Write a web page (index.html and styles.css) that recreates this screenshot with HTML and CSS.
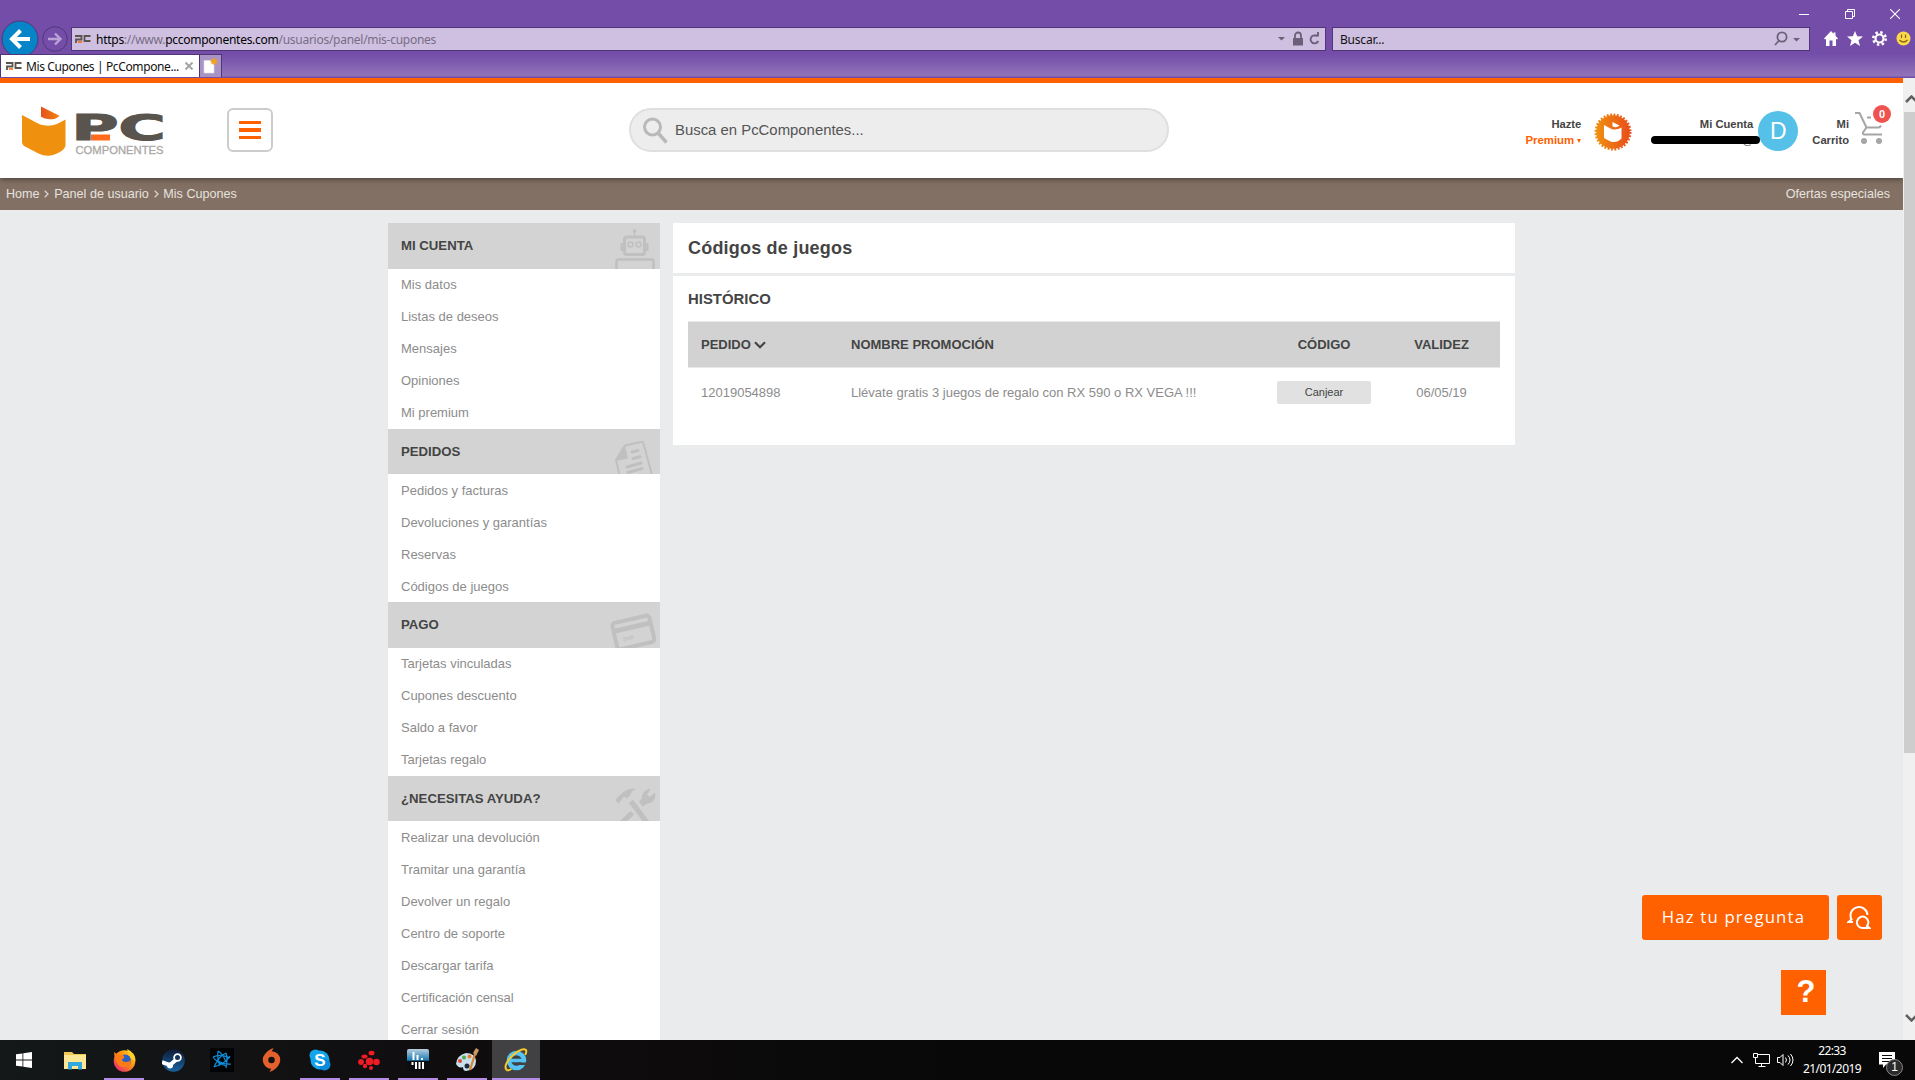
FILE: index.html
```html
<!DOCTYPE html>
<html lang="es">
<head>
    <meta charset="UTF-8">
    <meta name="viewport" content="width=device-width, initial-scale=1.0">
    <title>Mis Cupones | PcComponentes</title>
    <link rel="stylesheet" href="styles.css">
</head>
<body>
    <!-- Navegador -->
    <div class="browser">
        <div class="window-buttons">
            <svg width="10" height="10" viewBox="0 0 10 10"><path d="M0 5.5h10" stroke="#fff"/></svg>
            <svg width="10" height="10" viewBox="0 0 10 10" fill="none" stroke="#fff"><path d="M.5 2.5h7v7h-7zM2.5 2.500v-2h7v7h-2"/></svg>
            <svg width="10" height="10" viewBox="0 0 10 10"><path d="M0 0l10 10M10 0L0 10" stroke="#fff" stroke-width="1.1"/></svg>
        </div>
        <div class="nav-row">
            <svg class="nav-back" width="38" height="34" viewBox="0 0 38 34">
                <circle cx="19" cy="19" r="18" fill="#0584c7" stroke="#523577"/>
                <path d="M29 19H12M19.500 10.500L11 19l8.500 8.500" fill="none" stroke="#fff" stroke-width="4"/>
            </svg>
            <svg class="nav-next" width="26" height="26" viewBox="0 0 26 26">
                <circle cx="13" cy="13" r="12.300" fill="none" stroke="#523577"/>
                <path d="M6 13h12M13 7.500l5.500 5.500-5.500 5.500" fill="none" stroke="#b8a3d4" stroke-width="2.400"/>
            </svg>
            <div class="url-bar">
                <svg class="favicon" width="16" height="8" viewBox="0 0 16 8">
                    <path d="M1 8V4.500h5.500V1H0M15.500 1H9.500v5h6" fill="none" stroke="#59544d" stroke-width="1.800"/>
                    <path d="M3 7h4" stroke="#ff6000" stroke-width="1.500"/>
                </svg>
                <span class="url"><b>https</b>://www.<b>pccomponentes.com</b>/usuarios/panel/mis-cupones</span>
                <svg width="46" height="16" viewBox="0 0 46 16" fill="none" stroke="#6c6079">
                    <path d="M0 6h7L3.500 9.500z" fill="#6c6079" stroke="none"/>
                    <path d="M15 7h10v7.500H15z" fill="#6c6079" stroke="none"/>
                    <path d="M17 7V4.500a3 3 0 0 1 6 0V7" stroke-width="1.800"/>
                    <path d="M39 5.200A4 4 0 1 0 40.200 10M36 4.500h4V1" stroke-width="1.900"/>
                </svg>
            </div>
            <div class="search-bar">
                <span>Buscar...</span>
                <svg width="29" height="16" viewBox="0 0 29 16" fill="none" stroke="#6c6079" stroke-width="1.800">
                    <circle cx="8" cy="6" r="4.600"/><path d="M5 9.500L1 14"/>
                    <path d="M19 7h7l-3.500 3.500z" fill="#6c6079" stroke="none"/>
                </svg>
            </div>
            <div class="browser-tools">
                <svg width="14" height="15" viewBox="0 0 14 15" fill="#fff"><path d="M7 0L0 7.500l1 1 1-.8V15h3.500V9.500h3V15H12V7.700l1 .8 1-1-2.500-2.700V1.500h-2v1.200z"/></svg>
                <svg width="16" height="15" viewBox="0 0 16 15" fill="#fff"><path d="M8 0l2.200 5.200 5.800.3-4.500 3.700L13 15l-5-3.200L3 15l1.500-5.800L0 5.500l5.800-.3z"/></svg>
                <svg width="15" height="15" viewBox="0 0 15 15" fill="none" stroke="#fff"><circle cx="7.500" cy="7.500" r="4" stroke-width="2.200"/><circle cx="7.500" cy="7.500" r="6.200" stroke-width="2.500" stroke-dasharray="2.400 2.470"/></svg>
                <svg width="15" height="15" viewBox="0 0 15 15"><circle cx="7.500" cy="7.500" r="7" fill="#fcd94b"/><path d="M5.500 3.500v3.500M9.500 3.500v3.500M3.500 9q4 4 8 0" fill="none" stroke="#8a6414" stroke-width="1.200"/></svg>
            </div>
        </div>
        <div class="tabs">
            <div class="tab">
                <svg class="favicon" width="16" height="8" viewBox="0 0 16 8">
                    <path d="M1 8V4.500h5.500V1H0M15.500 1H9.500v5h6" fill="none" stroke="#59544d" stroke-width="1.800"/>
                    <path d="M3 7h4" stroke="#ff6000" stroke-width="1.500"/>
                </svg>
                <span class="tab-title">Mis Cupones | PcCompone...</span>
                <svg width="8" height="8" viewBox="0 0 8 8"><path d="M.5.5l7 7M7.500.5l-7 7" stroke="#a5a5a5" stroke-width="2"/></svg>
            </div>
            <div class="new-tab">
                <svg width="15" height="16" viewBox="0 0 15 16"><path d="M1 2.500h7l3 3V15H1z" fill="#fff" stroke="#ddd" stroke-width=".6"/><path d="M11 0v7M7.500 3.500h7M8.500 1l5 5M13.500 1l-5 5" stroke="#f5a21d" stroke-width="1.300"/></svg>
            </div>
        </div>
    </div>

    <!-- Página -->
    <div class="viewport">
        <div class="page">
            <header class="header">
                <svg class="logo" width="150" height="52" viewBox="0 0 150 52">
                    <defs>
                        <linearGradient id="flap"><stop offset="0" stop-color="#e6501e"/><stop offset="1" stop-color="#f0850f"/></linearGradient>
                    </defs>
                    <path d="M20 .5l18.500 9.200q-3 3.800-10 3.600-5-.2-8.500-2.500z" fill="url(#flap)"/>
                    <path d="M1 9l18 9.500q9 2.500 17-.5l8.500-4.500V39q0 3-4 6-12 8-23 2.500L3 40q-2-1.500-2-4z" fill="#f0900f"/>
                    <text class="logo-pc" x="50.500" y="34" textLength="94" lengthAdjust="spacingAndGlyphs">PC</text>
                    <path d="M70 28.500h19v6H70z" fill="#ff6a1c"/>
                    <text class="logo-sub" x="54.500" y="48" textLength="88" lengthAdjust="spacingAndGlyphs">COMPONENTES</text>
                </svg>
                <button class="menu-btn"><span></span><span></span><span></span></button>
                <div class="search">
                    <svg width="25" height="28" viewBox="0 0 25 28" fill="none" stroke="#b9b9b9"><circle cx="9.500" cy="11" r="8" stroke-width="3"/><path d="M15.500 17.500l8 9" stroke-width="3.500"/></svg>
                    <span>Busca en PcComponentes...</span>
                </div>
                <div class="user-nav">
                    <div class="nav-text premium">Hazte<br><span>Premium <i></i></span></div>
                    <svg class="seal" width="38" height="38" viewBox="0 0 38 38">
                        <defs>
                            <linearGradient id="seal"><stop offset="0" stop-color="#f0900f"/><stop offset="1" stop-color="#e84e1b"/></linearGradient>
                        </defs>
                        <circle cx="19" cy="19" r="16.800" fill="url(#seal)"/>
                        <circle cx="19" cy="19" r="17" fill="none" stroke="url(#seal)" stroke-width="3" stroke-dasharray="1.800 1.538"/>
                        <path d="M18.500 9l7 3.500q-3 3-7 1z" fill="#fff"/>
                        <path d="M10 12l7.500 4q5 1.500 10-1.500v11q-5 5-11 3L10 25z" fill="#fff"/>
                    </svg>
                    <div class="nav-text account">Mi Cuenta<br><span class="mail">@</span></div>
                    <div class="avatar">D</div>
                    <div class="nav-text cart-text">Mi<br>Carrito</div>
                    <div class="cart">
                        <svg width="30" height="34" viewBox="0 0 30 34" fill="none" stroke="#a5a5a5" stroke-width="2"><path d="M1 2h4.500l7 14.500h12q1.500 0 2.500-2M12.500 16.500L9 21.500q-.5 2 1.500 2H28M13 6.500h4"/><circle cx="10" cy="30" r="3" fill="#a5a5a5" stroke="none"/><circle cx="25" cy="30" r="3" fill="#a5a5a5" stroke="none"/></svg>
                        <span class="cart-badge">0</span>
                    </div>
                </div>
            </header>

            <nav class="breadcrumb">
                <div class="crumbs">
                    <a>Home</a>
                    <svg width="5" height="8" viewBox="0 0 5 8"><path d="M.7.7L4 4 .7 7.300" fill="none" stroke="#d8d2ce" stroke-width="1.300"/></svg>
                    <a>Panel de usuario</a>
                    <svg width="5" height="8" viewBox="0 0 5 8"><path d="M.7.7L4 4 .7 7.300" fill="none" stroke="#d8d2ce" stroke-width="1.300"/></svg>
                    <a>Mis Cupones</a>
                </div>
                <a class="offers">Ofertas especiales</a>
            </nav>

            <main class="content">
                <aside class="sidebar">
                    <h3>MI CUENTA
                        <svg width="42" height="41" viewBox="0 0 42 41" fill="none" stroke="#c0c0c0"><path d="M20.500 3v5" stroke-width="1.500"/><circle cx="20.500" cy="3" r="1.800" fill="#c0c0c0" stroke="none"/><rect x="10.500" y="9" width="20" height="17.500" rx="2" stroke-width="3"/><path d="M8 15v8M33 15v8" stroke-width="3"/><circle cx="16.500" cy="16.500" r="2.500" stroke-width="1.500"/><circle cx="24.500" cy="16.500" r="2.500" stroke-width="1.500"/><path d="M2.500 42V33q0-1.500 1.500-1.500h34q1.500 0 1.500 1.500v9" stroke-width="2.500"/></svg>
                    </h3>
                    <ul>
                        <li>Mis datos</li>
                        <li>Listas de deseos</li>
                        <li>Mensajes</li>
                        <li>Opiniones</li>
                        <li>Mi premium</li>
                    </ul>
                    <h3>PEDIDOS
                        <svg width="42" height="34" viewBox="0 0 42 34" fill="none" stroke="#c0c0c0"><path d="M5.500 35L2 20l9-14.500L27 2q2-.5 2.500 1.500L38 35" stroke-width="2"/><path d="M2 21l9-15.500 3 13z" fill="#c0c0c0" stroke="none"/><path d="M18 12l6-1.500M19 18.500l7-1.700M13 27l14-4M14 32.500l14-4" stroke-width="3" stroke-linecap="round"/></svg>
                    </h3>
                    <ul>
                        <li>Pedidos y facturas</li>
                        <li>Devoluciones y garantías</li>
                        <li>Reservas</li>
                        <li>Códigos de juegos</li>
                    </ul>
                    <h3>PAGO
                        <svg width="46" height="35" viewBox="0 0 46 35"><g transform="rotate(-13 23 18)" fill="none" stroke="#c0c0c0"><rect x="4" y="6" width="38" height="27" rx="3" stroke-width="4"/><path d="M4 14h38" stroke-width="5"/></g><text class="card-number" x="13" y="27" transform="rotate(-13 18 26)">2020</text></svg>
                    </h3>
                    <ul>
                        <li>Tarjetas vinculadas</li>
                        <li>Cupones descuento</li>
                        <li>Saldo a favor</li>
                        <li>Tarjetas regalo</li>
                    </ul>
                    <h3>¿NECESITAS AYUDA?
                        <svg width="42" height="34" viewBox="0 0 42 34" fill="#c0c0c0"><path d="M1 13l6-6q6-6 15-5-5 2-5.500 6l-3.500 3.500-3-2-5.500 7z"/><path d="M15 16l4-3.500L35 34h-6.500z"/><path d="M6 34l10.500-10 3.500 3.500L13.500 34zM25 14.500l3-3q-1-6 7-10l1 1.500-3 4.500 2.500 2.500 5-4 1 .5q0 9-8 10l-5 3z"/></svg>
                    </h3>
                    <ul>
                        <li>Realizar una devolución</li>
                        <li>Tramitar una garantía</li>
                        <li>Devolver un regalo</li>
                        <li>Centro de soporte</li>
                        <li>Descargar tarifa</li>
                        <li>Certificación censal</li>
                        <li>Cerrar sesión</li>
                    </ul>
                </aside>

                <section class="panel">
                    <h1>Códigos de juegos</h1>
                    <div class="history">
                        <h2>HISTÓRICO</h2>
                        <table>
                            <thead>
                                <tr>
                                    <th class="col-order">PEDIDO<svg width="12" height="8" viewBox="0 0 12 8"><path d="M1 1.300l5 5 5-5" fill="none" stroke="#444" stroke-width="2.200"/></svg></th>
                                    <th class="col-name">NOMBRE PROMOCIÓN</th>
                                    <th class="col-code">CÓDIGO</th>
                                    <th class="col-date">VALIDEZ</th>
                                </tr>
                            </thead>
                            <tbody>
                                <tr>
                                    <td>12019054898</td>
                                    <td>Llévate gratis 3 juegos de regalo con RX 590 o RX VEGA !!!</td>
                                    <td class="col-code"><button class="redeem">Canjear</button></td>
                                    <td class="col-date">06/05/19</td>
                                </tr>
                            </tbody>
                        </table>
                    </div>
                </section>
            </main>

            <div class="chat">
                <button class="ask">Haz tu pregunta</button>
                <button class="chat-icon">
                    <svg width="24" height="24" viewBox="0 0 24 24" fill="none" stroke="#fff" stroke-width="2"><path d="M20.500 9A8.500 8.500 0 1 0 4.500 13.500L1.500 16H6"/><path d="M20 20a5.700 5.700 0 1 0-5 2h7.500z"/></svg>
                </button>
            </div>
            <div class="help">?</div>
        </div>
        <div class="scrollbar">
            <svg width="10" height="8" viewBox="0 0 10 8"><path d="M1 7l5.500-5.500L12 7" fill="none" stroke="#606060" stroke-width="2.500"/></svg>
            <div class="thumb"></div>
            <svg class="down" width="10" height="8" viewBox="0 0 10 8"><path d="M1 1l5.500 5.500L12 1" fill="none" stroke="#606060" stroke-width="2.500"/></svg>
        </div>
    </div>

    <!-- Barra de tareas -->
    <div class="taskbar">
        <div class="task start"><svg width="16" height="16" viewBox="0 0 16 16" fill="#fff"><path d="M0 2.300L6.500 1.400v6.200H0zM7.300 1.300L16 0v7.600H7.300zM0 8.400h6.500v6.200L0 13.700zM7.300 8.400H16V16l-8.700-1.300z"/></svg></div>
        <div class="task"><svg width="22" height="19" viewBox="0 0 22 19"><path d="M0 1h8l2 2h12v15H0z" fill="#f3c856"/><path d="M0 4h22v14H0z" fill="#ffe694"/><path d="M4 11h14v7.500h-4V15H8v3.500H4z" fill="#31a8e0"/></svg></div>
        <div class="task open"><svg width="23" height="23" viewBox="0 0 23 23"><defs><linearGradient id="fox" x1="1" y1="0" x2="0" y2="1"><stop offset="0" stop-color="#ffe226"/><stop offset=".45" stop-color="#ff8b16"/><stop offset="1" stop-color="#e31587"/></linearGradient></defs><circle cx="11.500" cy="12" r="10.800" fill="url(#fox)"/><path d="M14 0q9 4 8.500 12L17 9z" fill="#ffcf24"/><circle cx="12" cy="11.500" r="6" fill="#2861c4"/><path d="M1 3l4 3 5 0q3 3-1 4 0 3 4 3 3 0 5-2-1 8-8 7Q2 17 1 3z" fill="#ff7b16"/></svg></div>
        <div class="task"><svg width="23" height="23" viewBox="0 0 23 23"><defs><linearGradient id="steam" x2="0" y2="1"><stop offset="0" stop-color="#101b38"/><stop offset="1" stop-color="#1763a0"/></linearGradient></defs><circle cx="11.500" cy="11.500" r="11.300" fill="url(#steam)"/><path d="M0 13l8 3 7-6" fill="none" stroke="#fff" stroke-width="4"/><circle cx="15.500" cy="8.500" r="3.400" fill="#14305c" stroke="#fff" stroke-width="1.800"/><circle cx="8" cy="16.500" r="3" fill="#fff"/></svg></div>
        <div class="task"><svg width="24" height="24" viewBox="0 0 24 24"><rect width="24" height="24" rx="1" fill="#020305"/><g fill="none" stroke="#0d8fdd" stroke-width="1.200"><path d="M8 3q5 3 8 11M8 3q-1 8 2 15M3 9q8-3 17 1M3 9q4 6 13 9M20 8q-4 7-16 11M16 5q2 6 0 15M16 5q-7 3-12 14M21 16q-8 1-14-4"/></g></svg></div>
        <div class="task"><svg width="19" height="24" viewBox="0 0 19 24"><circle cx="9.500" cy="12" r="6" fill="none" stroke="#e4602c" stroke-width="5.500"/><path d="M2 8Q5 2 11.500 0L9 5zM17 16q-3 6-9.500 8l2.500-5z" fill="#e4602c"/></svg></div>
        <div class="task open"><svg width="22" height="22" viewBox="0 0 22 22"><circle cx="11" cy="11" r="9.500" fill="#12a5eb"/><circle cx="6.500" cy="6.500" r="6" fill="#12a5eb"/><circle cx="15.500" cy="15.500" r="6" fill="#0b8bdc"/><text class="skype-s" x="11" y="17" text-anchor="middle">S</text></svg></div>
        <div class="task open"><svg width="22" height="20" viewBox="0 0 22 20" fill="#ee1c25"><circle cx="11.500" cy="11.500" r="3.800"/><circle cx="3" cy="12" r="2.900"/><circle cx="7" cy="16" r="2.200"/><circle cx="18.500" cy="12" r="3.300"/><circle cx="13" cy="18" r="2"/><ellipse cx="13.500" cy="3" rx="3" ry="2.300"/><ellipse cx="6.500" cy="6.500" rx="3" ry="2"/></svg></div>
        <div class="task open"><svg width="22" height="22" viewBox="0 0 22 22"><defs><linearGradient id="mon" x2="0" y2="1"><stop offset="0" stop-color="#b9cfdf"/><stop offset=".52" stop-color="#1879b5"/><stop offset=".53" stop-color="#0b0d10"/></linearGradient></defs><rect width="22" height="22" rx="2" fill="url(#mon)"/><path d="M6.500 3v8M10.500 6v5M15 9v2M5.500 13v3M9 13v7M12.500 13v7M16 13v7" stroke="#fff" stroke-width="2"/></svg></div>
        <div class="task open"><svg width="24" height="24" viewBox="0 0 24 24"><path d="M1 16Q2 7 11 5q9 0 10 8 0 9-10 10-3 0-3-4-4 2-7-3z" fill="#c8dfee"/><circle cx="9" cy="9.500" r="2" fill="#52a94b"/><circle cx="14.500" cy="8.500" r="2" fill="#eb7e2d"/><circle cx="5" cy="13" r="2" fill="#db4935"/><circle cx="12" cy="18" r="2.500" fill="#202b35"/><path d="M15 22l5-16" stroke="#d78631" stroke-width="2.200"/><path d="M18 5l3-5 3 2-3 6z" fill="#c89768"/></svg></div>
        <div class="task open active"><svg width="24" height="24" viewBox="0 0 24 24"><circle cx="12.500" cy="12.500" r="7.500" fill="none" stroke="#55c3f2" stroke-width="4.500"/><path d="M7 12.500h14" stroke="#55c3f2" stroke-width="3.500"/><path d="M15 14.500h9v2.500h-9z" fill="#414043"/><path d="M2.500 22Q-1 17 8 8 18-1 22 2q1 2-1 5M2.500 22q2 1 5-1" fill="none" stroke="#f7c82b" stroke-width="2"/></svg></div>
        <div class="tray">
            <svg width="12" height="8" viewBox="0 0 12 8"><path d="M.5 7L6 1.500 11.500 7" fill="none" stroke="#fff" stroke-width="1.300"/></svg>
            <svg class="network" width="17" height="14" viewBox="0 0 17 14" fill="none" stroke="#fff"><path d="M5 1.500h11.500v9H5M8.500 10.500v3M5.500 13.500h7M.5.5h4v4h-4zM2.500 4.500v6H5"/></svg>
            <svg class="volume" width="17" height="14" viewBox="0 0 17 14" fill="none" stroke="#fff"><path d="M.5 4.500h2.500l3-3v11l-3-3H.5zM8.500 4.500q2 2.500 0 5M11 2.500q4 4.500 0 9M13.500 1q5 6 0 12"/></svg>
            <div class="clock">22:33<br>21/01/2019</div>
            <div class="notify">
                <svg width="16" height="16" viewBox="0 0 16 16"><path d="M0 0h16v12.500H7L4 16v-3.500H0z" fill="#fff"/><path d="M3 3.500h10M3 6.500h10M3 9.500h10" stroke="#0a0a0a"/></svg>
                <span>1</span>
            </div>
        </div>
    </div>
</body>
</html>
```
FILE: styles.css
```css
* {
    box-sizing: border-box;
}

body {
    margin: 0;
    width: 1915px;
    height: 1080px;
    overflow: hidden;
    display: flex;
    flex-direction: column;
    font-family: "Liberation Sans", Arial, sans-serif;
    font-size: 13px;
    color: #444;
}

svg {
    display: block;
    flex-shrink: 0;
}

button {
    border: none;
    padding: 0;
    font-family: inherit;
}

/* Navegador */
.browser {
    height: 78px;
    background: linear-gradient(#744da9 0, #744da9 54px, #9174b8 76px, #744da9 77px);
    font-family: "Noto Sans", sans-serif;
    font-size: 12px;
    color: #111;
    flex-shrink: 0;
}

.window-buttons {
    height: 20px;
    padding: 9px 15px 0 0;
    display: flex;
    justify-content: flex-end;
    gap: 35.5px;
}

.nav-row {
    height: 34px;
    display: flex;
    padding-left: 1px;
}

.nav-next {
    margin: 6px 3px 0 3px;
}

.url-bar,
.search-bar {
    height: 24px;
    margin-top: 7px;
    background: #cfc0e2;
    border: 1px solid #523577;
    display: flex;
    align-items: center;
}

.url-bar {
    width: 1255px;
    padding: 0 1px 0 3px;
}

.url {
    flex: 1;
    margin-left: 5px;
    color: #776d83;
    letter-spacing: -0.27px;
}

.url b {
    font-weight: 400;
    color: #000;
}

.search-bar {
    width: 478px;
    margin-left: 6px;
    padding: 0 6px 0 7px;
    justify-content: space-between;
    letter-spacing: -0.2px;
}

.browser-tools {
    display: flex;
    gap: 9px;
    padding: 11px 0 0 14px;
}

.tabs {
    display: flex;
    height: 24px;
}

.tab {
    width: 200px;
    height: 23px;
    background: #fff;
    border: 1px solid #523577;
    border-bottom: none;
    display: flex;
    align-items: center;
    padding: 0 6px 0 5px;
}

.tab-title {
    flex: 1;
    margin-left: 4px;
    letter-spacing: -0.38px;
    white-space: nowrap;
}

.new-tab {
    width: 22px;
    height: 23px;
    background: #a794c4;
    border: 1px solid #523577;
    border-left: none;
    border-bottom: none;
    padding: 3px 0 0 3px;
}

/* Página */
.viewport {
    height: 962px;
    display: flex;
    flex-shrink: 0;
}

.page {
    position: relative;
    width: 1903px;
    overflow: hidden;
    background: #eaebed;
    border-top: 5px solid #ff6000;
}

.header {
    position: relative;
    z-index: 1;
    height: 95px;
    background: #fff;
    box-shadow: 0 1px 6px rgba(0, 0, 0, 0.5);
    display: flex;
    align-items: flex-start;
    padding-left: 21px;
}

.logo {
    margin-top: 23px;
}

.logo-pc {
    font-family: "DejaVu Sans", sans-serif;
    font-weight: 700;
    font-size: 35px;
    fill: #59544d;
    stroke: #59544d;
    stroke-width: 1.2px;
}

.logo-sub {
    font-size: 11.5px;
    fill: #aaa8a4;
    stroke: #aaa8a4;
    stroke-width: 0.3px;
}

.menu-btn {
    width: 46px;
    height: 44px;
    margin: 25px 0 0 56px;
    background: #fff;
    border: 2px solid #ccc;
    border-radius: 6px;
    display: flex;
    flex-direction: column;
    align-items: center;
    justify-content: center;
    gap: 4px;
}

.menu-btn span {
    width: 22px;
    height: 3.4px;
    background: #ff6000;
}

.search {
    width: 540px;
    height: 44px;
    margin: 25px 0 0 356px;
    background: #ededed;
    border: 2px solid #dfdfdf;
    border-radius: 22px;
    display: flex;
    align-items: center;
    padding-left: 12px;
    font-size: 14.9px;
    color: #555;
}

.search span {
    margin: -1px 0 0 7px;
}

.user-nav {
    display: flex;
    margin-left: auto;
    padding-right: 19px;
}

.nav-text {
    font-size: 11.2px;
    font-weight: 700;
    line-height: 16px;
    text-align: right;
    padding-top: 33px;
}

.premium span {
    color: #ff6000;
    font-size: 11.4px;
}

.premium i {
    display: inline-block;
    vertical-align: middle;
    border: 2.5px solid transparent;
    border-top: 4px solid #ff6000;
    border-bottom: none;
}

.seal {
    margin: 30px 0 0 13px;
}

.account {
    position: relative;
    width: 108px;
    margin-left: 13px;
}

/* correo oculto */
.account::after {
    content: "";
    position: absolute;
    left: 6px;
    top: 53px;
    width: 109px;
    height: 8px;
    border-radius: 4px;
    background: #000;
    z-index: 1;
}

.mail {
    font-weight: 400;
}

.avatar {
    width: 40px;
    height: 40px;
    margin: 28px 0 0 5px;
    border-radius: 50%;
    background: #56c1e8;
    color: #fff;
    font-size: 23px;
    line-height: 40px;
    text-align: center;
}

.cart-text {
    margin-left: 14px;
}

.cart {
    position: relative;
    margin: 28px 0 0 5px;
}

.cart-badge {
    position: absolute;
    left: 19px;
    top: -6px;
    width: 18px;
    height: 18px;
    border-radius: 50%;
    background: #ef5350;
    color: #fff;
    font-size: 11px;
    font-weight: 700;
    line-height: 18px;
    text-align: center;
}

.breadcrumb {
    height: 32px;
    background: #837064;
    color: #e6e2df;
    display: flex;
    justify-content: space-between;
    align-items: center;
    padding: 0 13px 0 6px;
    font-size: 12.6px;
}

.crumbs {
    display: flex;
    align-items: center;
    gap: 4.8px;
}

.content {
    display: flex;
    justify-content: center;
    align-items: flex-start;
    gap: 13px;
    padding-top: 13px;
}

.sidebar {
    width: 272px;
    background: #fff;
}

.sidebar h3 {
    position: relative;
    overflow: hidden;
    height: 45.6px;
    line-height: 45px;
    margin: 0;
    padding-left: 13px;
    background: #d3d3d3;
    font-size: 13.2px;
}

/* icono de la sección, recortado por abajo */
.sidebar h3 svg {
    position: absolute;
    right: 4px;
    bottom: 0;
}

.card-number {
    font-size: 5px;
    fill: #c0c0c0;
}

.sidebar ul {
    list-style: none;
    margin: 0;
    padding: 0;
}

.sidebar li {
    height: 32px;
    line-height: 31px;
    padding: 0.35px 0 0 13px;
    color: #8c8c8c;
    font-size: 13px;
}

.panel {
    width: 842px;
}

.panel h1 {
    margin: 0 0 3px;
    height: 50px;
    line-height: 50px;
    padding-left: 15px;
    background: #fff;
    font-size: 18px;
    letter-spacing: 0.2px;
}

.history {
    height: 169px;
    background: #fff;
    padding: 0 15px;
}

.history h2 {
    margin: 0;
    height: 45px;
    line-height: 46px;
    font-size: 14.9px;
}

.history table {
    width: 100%;
    table-layout: fixed;
    border-collapse: collapse;
}

.history th {
    height: 46px;
    padding: 0 0 1px 13px;
    background: #d2d2d2;
    border-top: 1px solid #e8e8e8;
    border-bottom: 1px solid #e8e8e8;
    font-size: 13px;
    text-align: left;
}

.history th svg {
    display: inline-block;
    margin-left: 3px;
}

.history td {
    height: 49px;
    padding: 0 0 0 13px;
    color: #8c8c8c;
    font-size: 13px;
    white-space: nowrap;
}

.col-order {
    width: 150px;
}

.col-name {
    width: 427px;
}

.history .col-code,
.history .col-date {
    padding-left: 0;
    text-align: center;
}

.col-code {
    width: 118px;
}

.redeem {
    width: 94px;
    height: 23px;
    background: #e1e1e1;
    border-radius: 2px;
    color: #444;
    font-size: 11px;
}

.chat {
    position: absolute;
    right: 21px;
    top: 812px;
    display: flex;
    gap: 8px;
}

.ask,
.chat-icon {
    height: 45px;
    background: #ff6000;
    border-radius: 3px;
}

.ask {
    width: 187px;
    padding: 0 4px 2px 0;
    color: #fff;
    font-family: "Open Sans", sans-serif;
    font-size: 16.8px;
    letter-spacing: 1.15px;
}

.chat-icon {
    width: 45px;
    padding-left: 10px;
}

.help {
    position: absolute;
    left: 1781px;
    top: 887px;
    width: 45px;
    height: 45px;
    padding-left: 5px;
    background: #ff6000;
    color: #fff;
    font-size: 31px;
    font-weight: 700;
    line-height: 43px;
    text-align: center;
}

.scrollbar {
    width: 12px;
    background: #f0f0f0;
    padding: 17px 0 0 1px;
    overflow: hidden;
}

.scrollbar svg {
    margin-left: 1px;
}

.thumb {
    height: 641px;
    margin-top: 9px;
    background: #cdcdcd;
}

.scrollbar .down {
    margin-top: 261px;
}

/* Barra de tareas */
.taskbar {
    height: 40px;
    background: linear-gradient(90deg, #141818, #100d0f 450px, #080808 1000px);
    display: flex;
    gap: 1px;
    flex-shrink: 0;
    color: #fff;
}

.task {
    width: 48px;
    height: 40px;
    display: flex;
    align-items: center;
    justify-content: center;
}

.start {
    margin-right: 2px;
}

.open {
    background: linear-gradient(#b48ee6, #b48ee6) no-repeat center bottom / 40px 2px;
}

.active {
    background-color: #414043;
    background-size: 48px 2px;
}

.tray {
    display: flex;
    align-items: center;
    margin-left: auto;
    padding-right: 20px;
}

.network {
    margin-left: 10px;
}

.volume {
    margin-left: 7px;
}

.clock {
    width: 66px;
    margin-left: 5px;
    font-family: "Noto Sans", sans-serif;
    font-size: 12px;
    line-height: 18px;
    letter-spacing: -0.6px;
    text-align: center;
}

.notify {
    position: relative;
    margin-left: 14px;
}

.notify span {
    position: absolute;
    left: 7px;
    top: 7px;
    width: 17px;
    height: 17px;
    border: 1px solid #888;
    border-radius: 50%;
    background: #2b2b2b;
    font-size: 12px;
    line-height: 15px;
    text-align: center;
}

.skype-s {
    font-size: 17px;
    font-weight: 700;
    fill: #fff;
}
```
